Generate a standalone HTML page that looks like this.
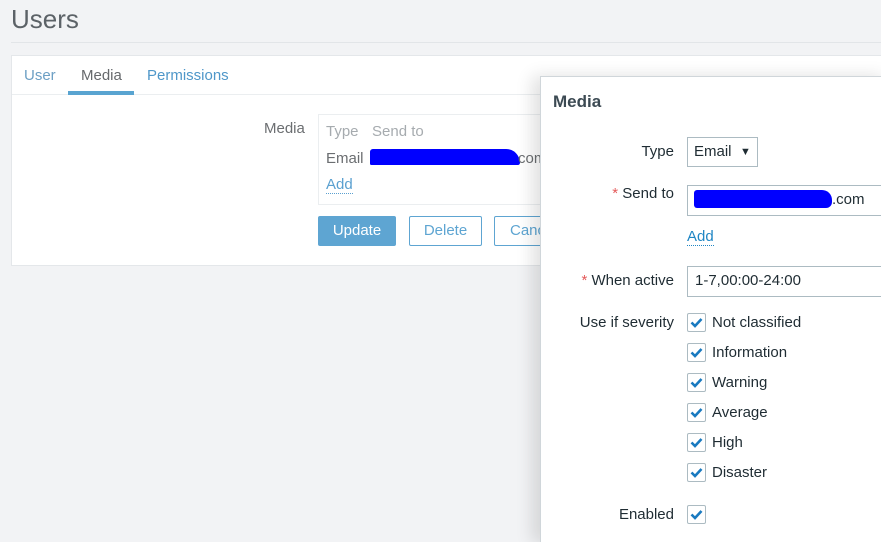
<!DOCTYPE html>
<html style="overflow:hidden"><head><style>
html,body{overflow:hidden}
body{margin:0;width:881px;height:542px;background:#f2f3f5;font-family:"Liberation Sans",Arial,sans-serif;position:relative;overflow:hidden;font-size:15px;color:#1f2c33}
.a{position:absolute;white-space:nowrap}
.lbl{position:absolute;right:207px;text-align:right;white-space:nowrap;font-size:15px;color:#1f2c33}
.req{color:#e45959}
.cb{position:absolute;left:687px;width:17px;height:17px;border:1px solid #acbbc2;border-radius:2px;background:#fff}
.cb svg{position:absolute;left:2px;top:3px}
.ct{position:absolute;left:712px;font-size:15px;color:#1f2c33}
</style></head><body>
<div class="a" style="left:11px;top:4px;font-size:26px;color:#5c6267">Users</div>
<div class="a" style="left:11px;top:42px;width:870px;height:1px;background:#e2e5e8"></div>
<div class="a" style="left:11px;top:55px;width:880px;height:209px;background:#fff;border:1px solid #e4e7ea"></div>
<div class="a" style="left:12px;top:94px;width:870px;height:1px;background:#ebeef0"></div>
<div class="a" style="left:24px;top:67px;color:#6c9fc4">User</div>
<div class="a" style="left:81px;top:67px;color:#66696c">Media</div>
<div class="a" style="left:147px;top:67px;color:#4f97c9">Permissions</div>
<div class="a" style="left:68px;top:91px;width:66px;height:4px;background:#59a4d1"></div>
<div class="a" style="left:264px;top:120px;color:#6b6e71">Media</div>
<div class="a" style="left:318px;top:114px;width:240px;height:89px;border:1px solid #ebeef0;background:#fff"></div>
<div class="a" style="left:326px;top:123px;color:#a6abaf">Type</div>
<div class="a" style="left:372px;top:123px;color:#a6abaf">Send to</div>
<div class="a" style="left:326px;top:150px;color:#6b6e71">Email</div>
<div class="a" style="left:370px;top:149px;width:150px;height:16px;background:#0000ff;border-radius:8px 40px 6px 4px"></div>
<div class="a" style="left:518px;top:150px;color:#6b6e71">com</div>
<div class="a" style="left:326px;top:177px;color:#5aa0d0;border-bottom:1px dotted #5aa0d0;line-height:16px">Add</div>
<div class="a" style="left:318px;top:216px;width:78px;height:30px;background:#5ea5d2;border-radius:2px;color:#fff;text-align:center;line-height:30px">Update</div>
<div class="a" style="left:409px;top:216px;width:71px;height:28px;border:1px solid #5ea5d2;border-radius:2px;color:#5ea5d2;text-align:center;line-height:28px">Delete</div>
<div class="a" style="left:494px;top:216px;width:71px;height:28px;border:1px solid #5ea5d2;border-radius:2px;color:#5ea5d2;line-height:28px;padding-left:15px">Cancel</div>
<div class="a" style="left:540px;top:76px;width:350px;height:466px;background:#fff;border-left:1px solid #d0d6da;border-top:1px solid #d0d6da;box-shadow:-8px 0 16px rgba(0,0,0,.12)"></div>
<div class="a" style="left:553px;top:92px;font-size:17px;font-weight:bold;color:#3c4a53">Media</div>
<div class="lbl" style="top:143px">Type</div>
<div class="a" style="left:687px;top:137px;width:69px;height:28px;border:1px solid #acbbc2;background:#fff"></div>
<div class="a" style="left:694px;top:143px">Email</div>
<div class="a" style="left:740px;top:146px;font-size:11px">▼</div>
<div class="lbl" style="top:185px"><span class="req">*</span> Send to</div>
<div class="a" style="left:687px;top:185px;width:200px;height:29px;border:1px solid #acbbc2;background:#fff"></div>
<div class="a" style="left:694px;top:190px;width:138px;height:18px;background:#0000ff;border-radius:3px 10px 6px 3px"></div>
<div class="a" style="left:832px;top:191px">.com</div>
<div class="a" style="left:687px;top:229px;color:#1f86c4;border-bottom:1px dotted #1f86c4;line-height:16px">Add</div>
<div class="lbl" style="top:272px"><span class="req">*</span> When active</div>
<div class="a" style="left:687px;top:266px;width:200px;height:29px;border:1px solid #acbbc2;background:#fff"></div>
<div class="a" style="left:695px;top:272px">1-7,00:00-24:00</div>
<div class="lbl" style="top:314px">Use if severity</div>
<div class="cb" style="top:313px"><svg width="13" height="11" viewBox="0 0 13 11"><path d="M1.5 5.5l3.5 3.5 6.5-7" fill="none" stroke="#1a7ac0" stroke-width="2.6"/></svg></div><div class="ct" style="top:314px">Not classified</div>
<div class="cb" style="top:343px"><svg width="13" height="11" viewBox="0 0 13 11"><path d="M1.5 5.5l3.5 3.5 6.5-7" fill="none" stroke="#1a7ac0" stroke-width="2.6"/></svg></div><div class="ct" style="top:344px">Information</div>
<div class="cb" style="top:373px"><svg width="13" height="11" viewBox="0 0 13 11"><path d="M1.5 5.5l3.5 3.5 6.5-7" fill="none" stroke="#1a7ac0" stroke-width="2.6"/></svg></div><div class="ct" style="top:374px">Warning</div>
<div class="cb" style="top:403px"><svg width="13" height="11" viewBox="0 0 13 11"><path d="M1.5 5.5l3.5 3.5 6.5-7" fill="none" stroke="#1a7ac0" stroke-width="2.6"/></svg></div><div class="ct" style="top:404px">Average</div>
<div class="cb" style="top:433px"><svg width="13" height="11" viewBox="0 0 13 11"><path d="M1.5 5.5l3.5 3.5 6.5-7" fill="none" stroke="#1a7ac0" stroke-width="2.6"/></svg></div><div class="ct" style="top:434px">High</div>
<div class="cb" style="top:463px"><svg width="13" height="11" viewBox="0 0 13 11"><path d="M1.5 5.5l3.5 3.5 6.5-7" fill="none" stroke="#1a7ac0" stroke-width="2.6"/></svg></div><div class="ct" style="top:464px">Disaster</div>
<div class="lbl" style="top:506px">Enabled</div>
<div class="cb" style="top:505px"><svg width="13" height="11" viewBox="0 0 13 11"><path d="M1.5 5.5l3.5 3.5 6.5-7" fill="none" stroke="#1a7ac0" stroke-width="2.6"/></svg></div>
</body></html>
